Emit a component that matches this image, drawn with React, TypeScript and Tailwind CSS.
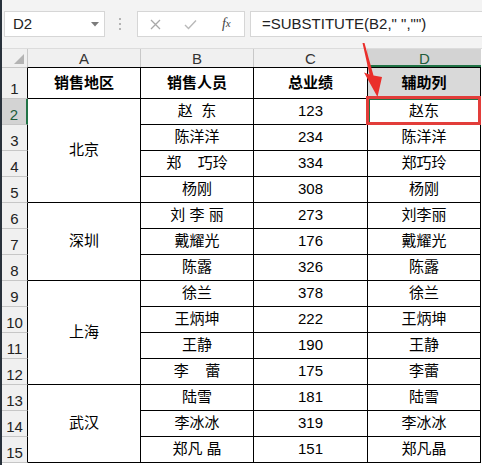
import React from "react";

type Row = [string, number, string];
const regions: { name: string; span: string; rows: Row[] }[] = [
  {
    name: "北京",
    span: "row-span-4",
    rows: [
      ["赵  东", 123, "赵东"],
      ["陈洋洋", 234, "陈洋洋"],
      ["郑    巧玲", 334, "郑巧玲"],
      ["杨刚", 308, "杨刚"],
    ],
  },
  {
    name: "深圳",
    span: "row-span-3",
    rows: [
      ["刘 李 丽", 273, "刘李丽"],
      ["戴耀光", 176, "戴耀光"],
      ["陈露", 326, "陈露"],
    ],
  },
  {
    name: "上海",
    span: "row-span-4",
    rows: [
      ["徐兰", 378, "徐兰"],
      ["王炳坤", 222, "王炳坤"],
      ["王静", 190, "王静"],
      ["李    蕾", 175, "李蕾"],
    ],
  },
  {
    name: "武汉",
    span: "row-span-3",
    rows: [
      ["陆雪", 181, "陆雪"],
      ["李冰冰", 319, "李冰冰"],
      ["郑凡 晶", 151, "郑凡晶"],
    ],
  },
];

const cell =
  "flex items-center justify-center whitespace-pre border-r border-b border-black";

function RowHeader({ n, selected }: { n: number; selected?: boolean }) {
  return (
    <div
      className={
        "flex items-end justify-center pb-[1px] leading-[16px] border-b border-[#c6c6c6] " +
        (selected
          ? "bg-[#d3d3d3] border-r-2 border-r-[#217346] text-[#225c3a]"
          : "bg-[#f0f0f0] border-r border-r-black text-[#222]")
      }
    >
      {n}
    </div>
  );
}

export default function App() {
  let rowNo = 1;
  const body: React.ReactNode[] = [];
  regions.forEach((reg, ri) => {
    reg.rows.forEach((r, i) => {
      rowNo += 1;
      const n = rowNo;
      body.push(<RowHeader key={`h${n}`} n={n} selected={n === 2} />);
      if (i === 0) {
        body.push(
          <div key={`a${ri}`} className={`${cell} ${reg.span}`}>
            {reg.name}
          </div>
        );
      }
      body.push(
        <div key={`b${n}`} className={cell}>
          {r[0]}
        </div>
      );
      body.push(
        <div key={`c${n}`} className={cell}>
          {r[1]}
        </div>
      );
      body.push(
        <div key={`d${n}`} className={cell}>
          {r[2]}
        </div>
      );
    });
  });

  return (
    <div className="relative flex w-[482px] h-[465px] overflow-hidden bg-white font-['Liberation_Sans','Noto_Sans_CJK_SC',sans-serif] text-[15px] text-black">
      <div className="w-[2px] shrink-0 bg-[#28313b]" />
      <div className="flex flex-1 flex-col">
        {/* formula toolbar */}
        <div className="flex h-[49px] shrink-0 items-center bg-[#f3f3f3] border-b border-[#dcdcdc] pl-[2px]">
          <div className="flex h-[26px] w-[101px] shrink-0 items-center justify-between border border-[#d6d6d6] bg-white pl-[8px] pr-[5px] text-[#222]">
            <span>D2</span>
            <svg width="8" height="5" viewBox="0 0 8 5">
              <path d="M0 0H8L4 4.5Z" fill="#7b7b7b" />
            </svg>
          </div>
          <div className="ml-[14px] mr-[16px] flex flex-col gap-[3px]">
            <span className="block h-[2px] w-[2px] bg-[#b4b4b4]" />
            <span className="block h-[2px] w-[2px] bg-[#b4b4b4]" />
            <span className="block h-[2px] w-[2px] bg-[#b4b4b4]" />
          </div>
          <div className="flex h-[26px] w-[108px] shrink-0 items-center border border-[#d6d6d6] bg-white">
            <div className="flex w-[36px] justify-center">
              <svg width="11" height="11" viewBox="0 0 11 11">
                <path d="M1 1L10 10M10 1L1 10" stroke="#a9a9a9" strokeWidth="1.3" />
              </svg>
            </div>
            <div className="flex w-[36px] justify-center">
              <svg width="13" height="11" viewBox="0 0 13 11">
                <path d="M1 6L4.5 9.5L12 1.5" stroke="#b9b9b9" strokeWidth="1.4" fill="none" />
              </svg>
            </div>
            <div className="flex w-[36px] justify-center font-['Liberation_Serif',serif] italic text-[14px] text-[#444] leading-none">
              f<span className="text-[11px] translate-y-[1px]">x</span>
            </div>
          </div>
          <div className="ml-[5px] flex h-[26px] flex-1 items-center border border-r-0 border-[#d6d6d6] bg-white pl-[11px] text-[#222] whitespace-pre">
            =SUBSTITUTE(B2," ","")
          </div>
        </div>

        {/* grid */}
        <div className="grid grid-cols-[26px_113px_113px_114px_113px] grid-rows-[18px_32px_repeat(14,26px)]">
          {/* column headers */}
          <div className="relative bg-[#f0f0f0] border-r border-[#c8c8c8]">
            <svg className="absolute right-[3px] bottom-[3px]" width="10" height="10" viewBox="0 0 10 10">
              <path d="M10 0V10H0Z" fill="#b4b4b4" />
            </svg>
          </div>
          <div className="flex items-center justify-center bg-[#f0f0f0] border-r border-[#c8c8c8] text-[#333] leading-none pt-[1px]">A</div>
          <div className="flex items-center justify-center bg-[#f0f0f0] border-r border-[#c8c8c8] text-[#333] leading-none pt-[1px]">B</div>
          <div className="flex items-center justify-center bg-[#f0f0f0] border-r border-[#c8c8c8] text-[#333] leading-none pt-[1px]">C</div>
          <div className="flex items-center justify-center bg-[#d3d3d3] border-b-2 border-[#217346] text-[#225c3a] leading-none pt-[2px]">D</div>

          {/* row 1 */}
          <div className="flex items-end justify-center pb-[1px] leading-[16px] bg-[#f0f0f0] border-t border-t-[#c6c6c6] border-b border-b-[#c6c6c6] border-r border-r-black text-[#222]">1</div>
          <div className={`${cell} border-t font-bold`}>销售地区</div>
          <div className={`${cell} border-t font-bold`}>销售人员</div>
          <div className={`${cell} border-t font-bold`}>总业绩</div>
          <div className={`${cell} border-t font-bold bg-[#d9d9d9]`}>辅助列</div>

          {body}
        </div>
      </div>

      {/* active cell selection */}
      <div className="absolute left-[368px] top-[98px] h-[27px] w-[113px] border-2 border-[#217346]" />
      {/* red highlight box */}
      <div className="absolute left-[366px] top-[96px] h-[29px] w-[115px] border-[3px] border-[#e23d3a]" />
      {/* red arrow */}
      <svg className="absolute left-0 top-0" width="482" height="465" viewBox="0 0 482 465">
        <polygon
          points="362.5,43 364.5,43 373.5,75.5 382,77 377.5,97 364,72.5 369.5,74.5"
          fill="#ea2f2b"
        />
      </svg>
    </div>
  );
}
